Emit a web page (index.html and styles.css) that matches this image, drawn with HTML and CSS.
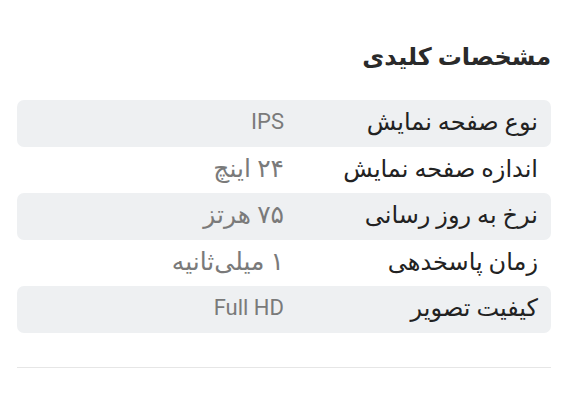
FILE: index.html
```html
<!DOCTYPE html>
<html lang="fa" dir="rtl">
<head>
<meta charset="utf-8">
<link rel="stylesheet" href="styles.css">
</head>
<body>
<section class="specs">
  <h2 class="title">مشخصات کلیدی</h2>
  <div class="list">
    <div class="row shaded"><span class="label">نوع صفحه نمایش</span><span class="value">IPS</span></div>
    <div class="row"><span class="label">اندازه صفحه نمایش</span><span class="value fa">۲۴ اینچ</span></div>
    <div class="row shaded"><span class="label">نرخ به روز رسانی</span><span class="value fa">۷۵ هرتز</span></div>
    <div class="row"><span class="label">زمان پاسخدهی</span><span class="value fa">۱ میلی‌ثانیه</span></div>
    <div class="row shaded"><span class="label">کیفیت تصویر</span><span class="value">Full HD</span></div>
  </div>
  <div class="divider"></div>
</section>
</body>
</html>
```
FILE: styles.css
```css
html, body {
  margin: 0;
  padding: 0;
  background: #ffffff;
}
body {
  font-family: Roboto, "DejaVu Sans", sans-serif;
  color: #222;
}
.specs {
  padding: 39px 23px 0 17px;
}
.title {
  margin: 0 0 25px 0;
  font-size: 24px;
  font-weight: 600;
  line-height: 36px;
  color: #2a2a2a;
}
.list {
  display: flex;
  flex-direction: column;
}
.row {
  display: grid;
  grid-template-columns: 254px 1fr;
  align-items: center;
  height: 46.5px;
  padding: 0 13px 2px;
  box-sizing: border-box;
  border-radius: 7px;
}
.row.shaded {
  background: #eef0f2;
}
.label {
  font-size: 24px;
  line-height: 30px;
  color: #222;
}
.value {
  font-size: 22px;
  line-height: 30px;
  color: #7a7a7a;
}
.value.fa {
  font-size: 25px;
}
.divider {
  margin-top: 34px;
  height: 1px;
  background: #e6e6e6;
}
```
